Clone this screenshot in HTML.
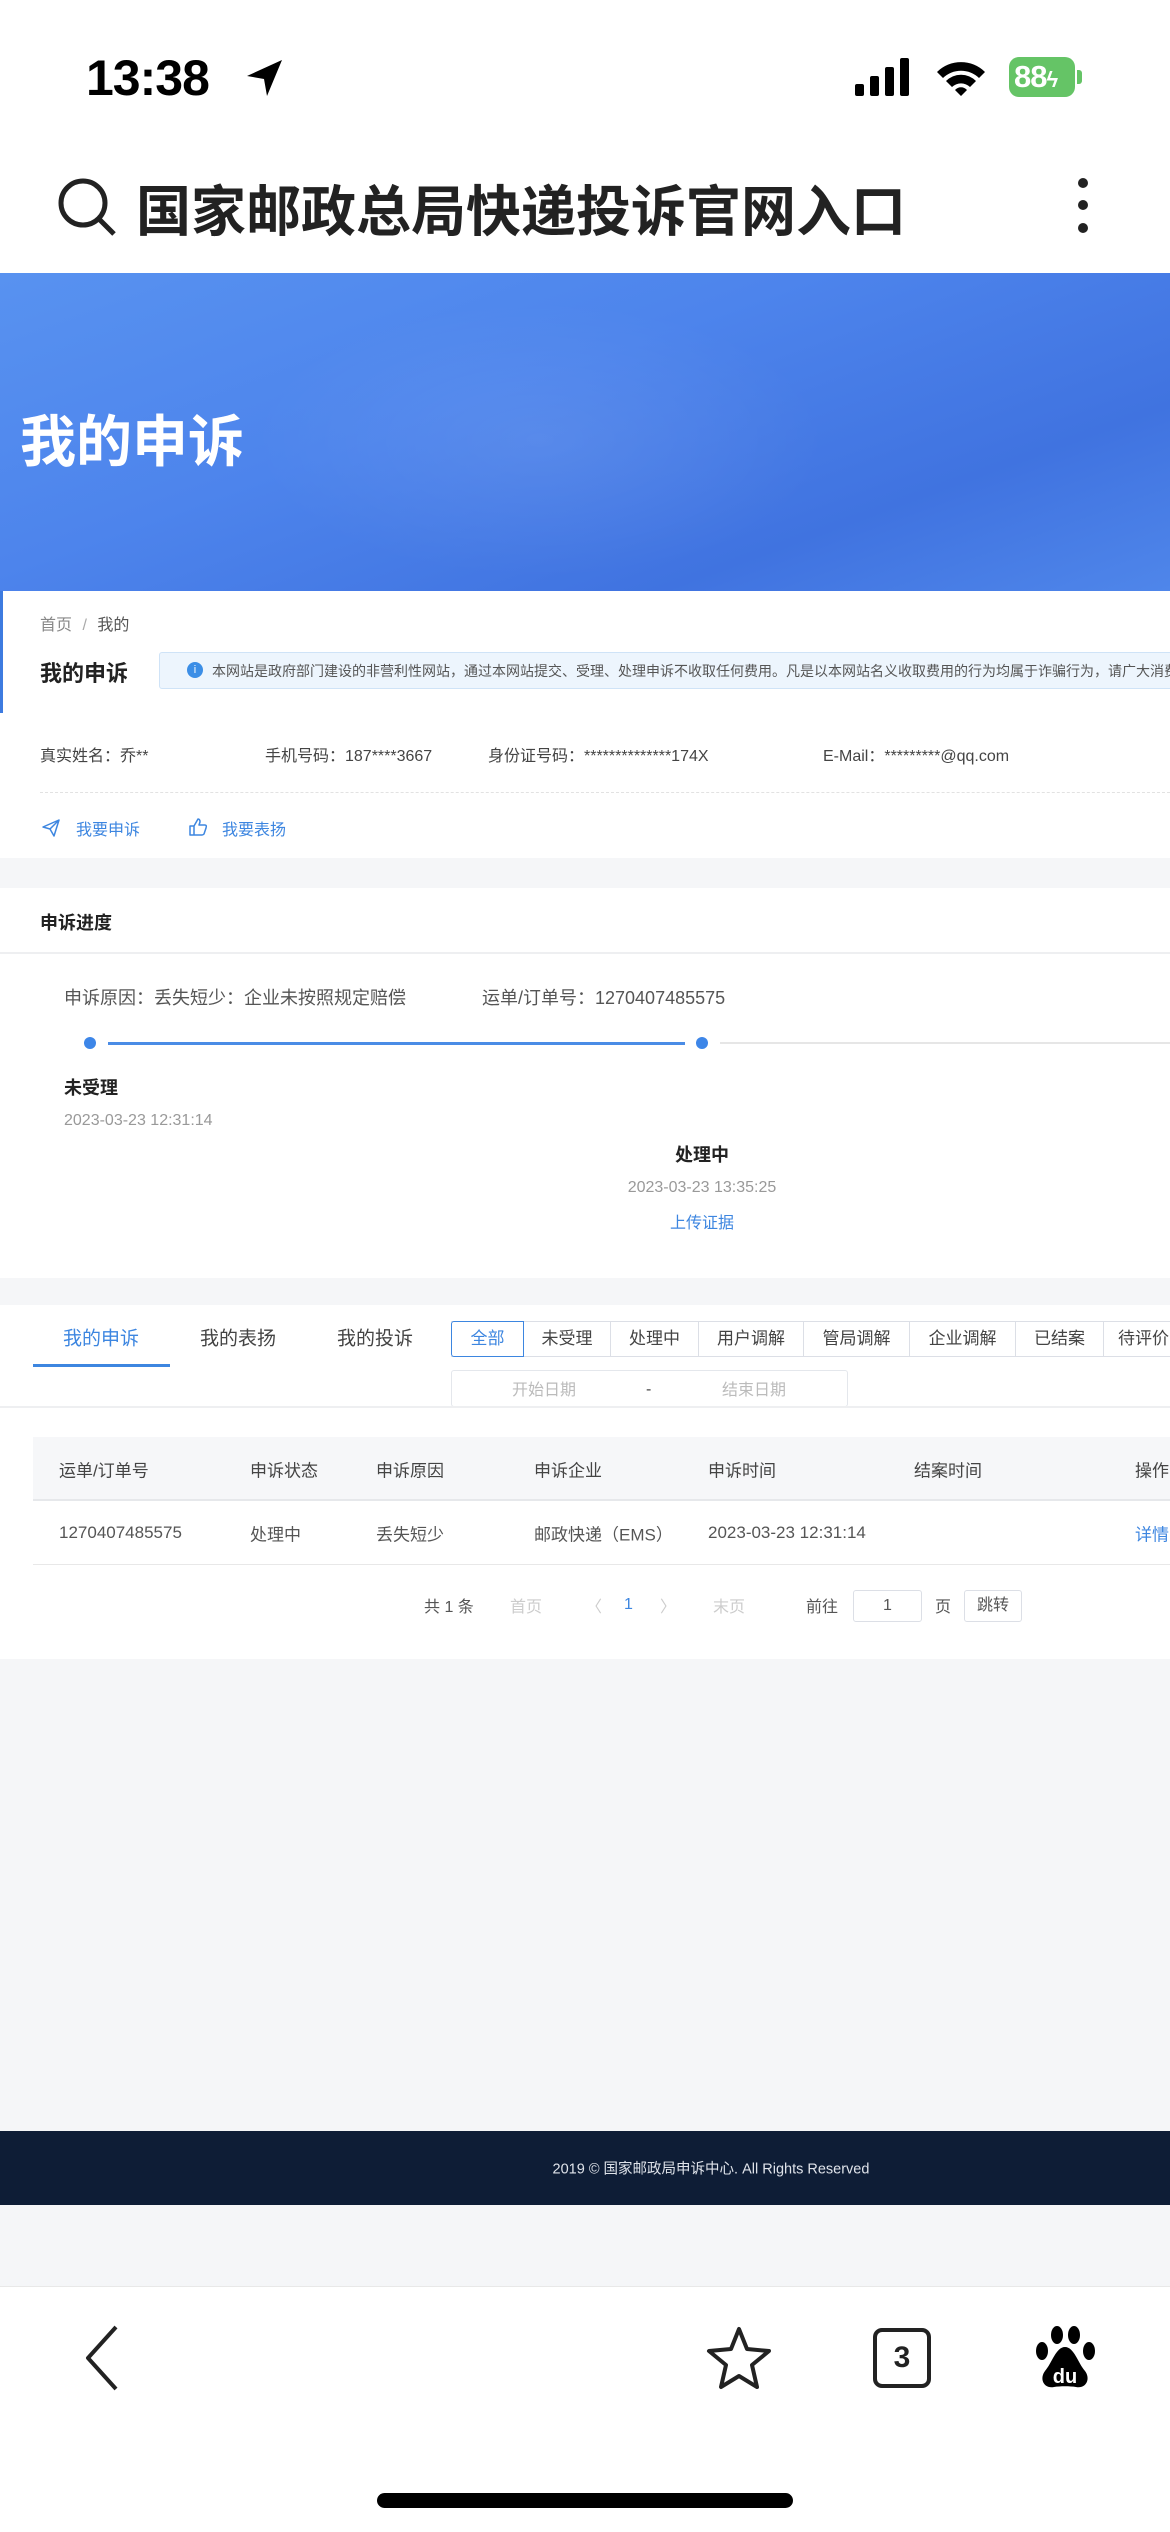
<!DOCTYPE html>
<html><head><meta charset="utf-8">
<style>
*{margin:0;padding:0;box-sizing:border-box}
body{width:1170px;height:2532px;position:relative;overflow:hidden;background:#f5f6f8;font-family:"Liberation Sans","Noto Sans CJK SC",sans-serif;color:#333}
.a{position:absolute;white-space:nowrap}
.c{transform:translateY(-50%)}
</style></head><body>
<div class="a" style="left:0;top:0;width:1170px;height:273px;background:#fff"></div>
<div class="a c" style="left:86px;top:78px;font-size:50px;font-weight:bold;color:#000;letter-spacing:-1px">13:38</div>
<svg class="a" style="left:244px;top:57px" width="42" height="42" viewBox="0 0 42 42"><path d="M38 3 L3 19 L20 22 L23 39 Z" fill="#000"/></svg>
<svg class="a" style="left:855px;top:58px" width="60" height="40"><rect x="0" y="26" width="9" height="12" rx="2"/><rect x="15" y="18" width="9" height="20" rx="2"/><rect x="30" y="9" width="9" height="29" rx="2"/><rect x="45" y="0" width="9" height="38" rx="2"/></svg>
<svg class="a" style="left:935px;top:58px" width="52" height="40" viewBox="0 0 52 40"><path d="M2 14 A34 34 0 0 1 50 14 L44 20 A26 26 0 0 0 8 20Z M11 23 A21 21 0 0 1 41 23 L35 29 A13 13 0 0 0 17 29Z M20 32 A8 8 0 0 1 32 32 L26 38Z" fill="#000"/></svg>
<div class="a" style="left:1009px;top:57px;width:66px;height:40px;border-radius:10px;background:#65c466;color:#fff;font-size:31px;font-weight:bold;line-height:40px;padding-left:5px;letter-spacing:-1px">88<span style="font-size:22px">ϟ</span></div>
<div class="a" style="left:1077px;top:70px;width:5px;height:14px;border-radius:0 3px 3px 0;background:#65c466"></div>

<svg class="a" style="left:56px;top:176px" width="64" height="62" viewBox="0 0 64 62"><circle cx="27" cy="27" r="22" fill="none" stroke="#222" stroke-width="5"/><path d="M43 43 L58 58" stroke="#222" stroke-width="5"/></svg>
<div class="a c" style="left:136px;top:207px;font-size:55px;color:#222;font-weight:bold;letter-spacing:0px">国家邮政总局快递投诉官网入口</div>
<div class="a" style="left:1078px;top:178px;width:10px;height:10px;border-radius:5px;background:#222"></div>
<div class="a" style="left:1078px;top:200px;width:10px;height:10px;border-radius:5px;background:#222"></div>
<div class="a" style="left:1078px;top:223px;width:10px;height:10px;border-radius:5px;background:#222"></div>

<div class="a" style="left:0;top:273px;width:1170px;height:318px;background:linear-gradient(160deg,#5892f0 0%,#4d84ec 40%,#4073e0 75%,#4f86ea 100%)"></div>
<div class="a" style="left:250px;top:300px;width:580px;height:280px;background:radial-gradient(ellipse at center,rgba(255,255,255,0.08),rgba(255,255,255,0) 70%)"></div>
<div class="a c" style="left:20px;top:438px;font-size:56px;font-weight:bold;color:#fff">我的申诉</div>

<div class="a" style="left:0;top:591px;width:1170px;height:267px;background:#fff"></div>
<div class="a" style="left:0;top:591px;width:3px;height:122px;background:#3d7be0"></div>
<div class="a c" style="left:40px;top:623px;font-size:16px;color:#888">首页 <span style="color:#aaa;margin:0 6px">/</span> <span style="color:#555">我的</span></div>
<div class="a c" style="left:40px;top:672px;font-size:22px;font-weight:bold;color:#222">我的申诉</div>
<div class="a" style="left:159px;top:652px;width:1020px;height:37px;background:#edf5fd;border:1px solid #cfe3f7;border-radius:3px"></div>
<div class="a" style="left:187px;top:662px;width:16px;height:16px;border-radius:8px;background:#3c8ee6;color:#fff;font-size:11px;text-align:center;line-height:16px">i</div>
<div class="a c" style="left:212px;top:671px;font-size:14px;color:#555">本网站是政府部门建设的非营利性网站，通过本网站提交、受理、处理申诉不收取任何费用。凡是以本网站名义收取费用的行为均属于诈骗行为，请广大消费者</div>
<div class="a c" style="left:40px;top:754px;font-size:16px;color:#444">真实姓名：乔**</div>
<div class="a c" style="left:265px;top:754px;font-size:16px;color:#444">手机号码：187****3667</div>
<div class="a c" style="left:488px;top:754px;font-size:16px;color:#444">身份证号码：**************174X</div>
<div class="a c" style="left:823px;top:754px;font-size:16px;color:#444">E-Mail：*********@qq.com</div>
<div class="a" style="left:40px;top:792px;width:1130px;border-top:1px dashed #e2e2e2"></div>
<svg class="a" style="left:41px;top:818px" width="20" height="20" viewBox="0 0 20 20"><path d="M2 9 L18 2 L13 18 L9 11 Z M9 11 L18 2" fill="none" stroke="#3d86e0" stroke-width="1.5" stroke-linejoin="round"/></svg>
<div class="a c" style="left:76px;top:828px;font-size:16px;color:#3d86e0">我要申诉</div>
<svg class="a" style="left:188px;top:817px" width="20" height="20" viewBox="0 0 20 20"><path d="M2 9 H6 V18 H2 Z M6 9 L10 2 Q12 2 12 5 L11 8 H17 Q19 8 18 11 L16 17 Q15 18 14 18 H6" fill="none" stroke="#3d86e0" stroke-width="1.5" stroke-linejoin="round"/></svg>
<div class="a c" style="left:222px;top:828px;font-size:16px;color:#3d86e0">我要表扬</div>

<div class="a" style="left:0;top:888px;width:1170px;height:390px;background:#fff"></div>
<div class="a c" style="left:40px;top:922px;font-size:18px;font-weight:bold;color:#222">申诉进度</div>
<div class="a" style="left:0;top:952px;width:1170px;height:2px;background:#eeeff1"></div>
<div class="a c" style="left:64px;top:997px;font-size:18px;color:#555">申诉原因：丢失短少：企业未按照规定赔偿</div>
<div class="a c" style="left:482px;top:997px;font-size:18px;color:#555">运单/订单号：1270407485575</div>
<div class="a" style="left:84px;top:1037px;width:12px;height:12px;border-radius:6px;background:#3d86e8"></div>
<div class="a" style="left:108px;top:1042px;width:577px;height:3px;background:#4a8ce6"></div>
<div class="a" style="left:696px;top:1037px;width:12px;height:12px;border-radius:6px;background:#3d86e8"></div>
<div class="a" style="left:720px;top:1042px;width:450px;height:2px;background:#e6e6e6"></div>
<div class="a c" style="left:64px;top:1087px;font-size:18px;font-weight:bold;color:#222">未受理</div>
<div class="a c" style="left:64px;top:1121px;font-size:16px;color:#999">2023-03-23 12:31:14</div>
<div class="a c" style="left:702px;top:1154px;font-size:18px;font-weight:bold;color:#222;transform:translate(-50%,-50%)">处理中</div>
<div class="a c" style="left:702px;top:1188px;font-size:16px;color:#999;transform:translate(-50%,-50%)">2023-03-23 13:35:25</div>
<div class="a c" style="left:702px;top:1221px;font-size:16px;color:#3d86e0;transform:translate(-50%,-50%)">上传证据</div>

<div class="a" style="left:0;top:1305px;width:1170px;height:354px;background:#fff"></div>
<div class="a c" style="left:63px;top:1337px;font-size:19px;color:#3d86e0">我的申诉</div>
<div class="a c" style="left:200px;top:1337px;font-size:19px;color:#444">我的表扬</div>
<div class="a c" style="left:337px;top:1337px;font-size:19px;color:#444">我的投诉</div>
<div class="a" style="left:33px;top:1364px;width:137px;height:3px;background:#3d86e0"></div>
<div class="a" style="left:451px;top:1321px;width:720px;height:36px;border:1px solid #dcdfe6;border-left:none"></div>
<div class="a" style="left:451px;top:1321px;width:73px;height:36px;border:1px solid #3d86e0;border-radius:3px 0 0 3px;color:#3d86e0;font-size:17px;line-height:34px;text-align:center">全部</div>
<div class="a" style="left:524px;top:1321px;width:87px;height:36px;border-right:1px solid #dcdfe6;font-size:17px;line-height:36px;text-align:center;color:#444">未受理</div>
<div class="a" style="left:611px;top:1321px;width:88px;height:36px;border-right:1px solid #dcdfe6;font-size:17px;line-height:36px;text-align:center;color:#444">处理中</div>
<div class="a" style="left:699px;top:1321px;width:105px;height:36px;border-right:1px solid #dcdfe6;font-size:17px;line-height:36px;text-align:center;color:#444">用户调解</div>
<div class="a" style="left:804px;top:1321px;width:106px;height:36px;border-right:1px solid #dcdfe6;font-size:17px;line-height:36px;text-align:center;color:#444">管局调解</div>
<div class="a" style="left:910px;top:1321px;width:106px;height:36px;border-right:1px solid #dcdfe6;font-size:17px;line-height:36px;text-align:center;color:#444">企业调解</div>
<div class="a" style="left:1016px;top:1321px;width:88px;height:36px;border-right:1px solid #dcdfe6;font-size:17px;line-height:36px;text-align:center;color:#444">已结案</div>
<div class="a" style="left:1104px;top:1321px;width:80px;height:36px;font-size:17px;line-height:36px;padding-left:14px;color:#444">待评价</div>
<div class="a" style="left:451px;top:1370px;width:397px;height:37px;border:1px solid #e4e7ec;border-radius:3px"></div>
<div class="a c" style="left:512px;top:1388px;font-size:16px;color:#bbb">开始日期</div>
<div class="a c" style="left:646px;top:1390px;font-size:16px;color:#444">-</div>
<div class="a c" style="left:722px;top:1388px;font-size:16px;color:#bbb">结束日期</div>
<div class="a" style="left:0;top:1406px;width:1170px;height:2px;background:#eeeff1"></div>
<div class="a" style="left:33px;top:1437px;width:1137px;height:64px;background:#f6f7f9;border-bottom:2px solid #e6e8eb"></div>
<div class="a c" style="left:59px;top:1469px;font-size:17px;color:#444">运单/订单号</div>
<div class="a c" style="left:250px;top:1469px;font-size:17px;color:#444">申诉状态</div>
<div class="a c" style="left:376px;top:1469px;font-size:17px;color:#444">申诉原因</div>
<div class="a c" style="left:534px;top:1469px;font-size:17px;color:#444">申诉企业</div>
<div class="a c" style="left:708px;top:1469px;font-size:17px;color:#444">申诉时间</div>
<div class="a c" style="left:914px;top:1469px;font-size:17px;color:#444">结案时间</div>
<div class="a c" style="left:1135px;top:1469px;font-size:17px;color:#444">操作</div>
<div class="a c" style="left:59px;top:1533px;font-size:17px;color:#555">1270407485575</div>
<div class="a c" style="left:250px;top:1533px;font-size:17px;color:#555">处理中</div>
<div class="a c" style="left:376px;top:1533px;font-size:17px;color:#555">丢失短少</div>
<div class="a c" style="left:534px;top:1533px;font-size:17px;color:#555">邮政快递（EMS）</div>
<div class="a c" style="left:708px;top:1533px;font-size:17px;color:#555">2023-03-23 12:31:14</div>
<div class="a c" style="left:1135px;top:1533px;font-size:17px;color:#3d86e0">详情</div>
<div class="a" style="left:33px;top:1564px;width:1137px;height:1px;background:#e8e8e8"></div>
<div class="a c" style="left:424px;top:1605px;font-size:16px;color:#555">共 1 条</div>
<div class="a c" style="left:510px;top:1605px;font-size:16px;color:#ccc">首页</div>
<div class="a c" style="left:586px;top:1605px;font-size:16px;color:#ccc">〈</div>
<div class="a c" style="left:624px;top:1605px;font-size:16px;color:#3d86e0">1</div>
<div class="a c" style="left:660px;top:1605px;font-size:16px;color:#ccc">〉</div>
<div class="a c" style="left:713px;top:1605px;font-size:16px;color:#ccc">末页</div>
<div class="a c" style="left:806px;top:1605px;font-size:16px;color:#555">前往</div>
<div class="a" style="left:853px;top:1590px;width:69px;height:32px;border:1px solid #dcdfe6;border-radius:3px;font-size:16px;line-height:30px;text-align:center;color:#555">1</div>
<div class="a c" style="left:935px;top:1605px;font-size:16px;color:#555">页</div>
<div class="a" style="left:964px;top:1590px;width:58px;height:32px;border:1px solid #dcdfe6;border-radius:3px;font-size:16px;line-height:30px;text-align:center;color:#555">跳转</div>

<div class="a" style="left:0;top:2131px;width:1170px;height:74px;background:#0e1d36"></div>
<div class="a c" style="left:711px;top:2168px;font-size:14.5px;color:#dfe3ea;transform:translate(-50%,-50%)">2019 © 国家邮政局申诉中心. All Rights Reserved</div>

<div class="a" style="left:0;top:2286px;width:1170px;height:246px;background:#fff;border-top:1px solid #e8e8e8"></div>
<svg class="a" style="left:82px;top:2325px" width="40" height="66" viewBox="0 0 40 66"><path d="M34 2 L6 33 L34 64" fill="none" stroke="#222" stroke-width="4" stroke-linejoin="round"/></svg>
<svg class="a" style="left:704px;top:2325px" width="70" height="66" viewBox="0 0 70 66"><path d="M35 4 L43 24 L65 26 L48 40 L53 62 L35 51 L17 62 L22 40 L5 26 L27 24 Z" fill="none" stroke="#222" stroke-width="4" stroke-linejoin="round"/></svg>
<div class="a" style="left:873px;top:2328px;width:58px;height:60px;border:4px solid #222;border-radius:9px;font-size:30px;font-weight:bold;line-height:52px;text-align:center;color:#222">3</div>
<svg class="a" style="left:1034px;top:2325px" width="62" height="66" viewBox="0 0 62 66"><ellipse cx="8" cy="26" rx="6" ry="9"/><ellipse cx="23" cy="10" rx="6" ry="9"/><ellipse cx="40" cy="10" rx="6" ry="9"/><ellipse cx="55" cy="26" rx="6" ry="9"/><path d="M31 22 C22 22 18 38 11 46 C5 54 10 64 20 62 C26 61 36 61 42 62 C52 64 57 54 51 46 C44 38 40 22 31 22Z"/><text x="31" y="58" font-size="20" font-weight="bold" fill="#fff" text-anchor="middle" font-family="Liberation Sans,sans-serif">du</text></svg>
<div class="a" style="left:377px;top:2493px;width:416px;height:15px;border-radius:8px;background:#000"></div>
</body></html>
